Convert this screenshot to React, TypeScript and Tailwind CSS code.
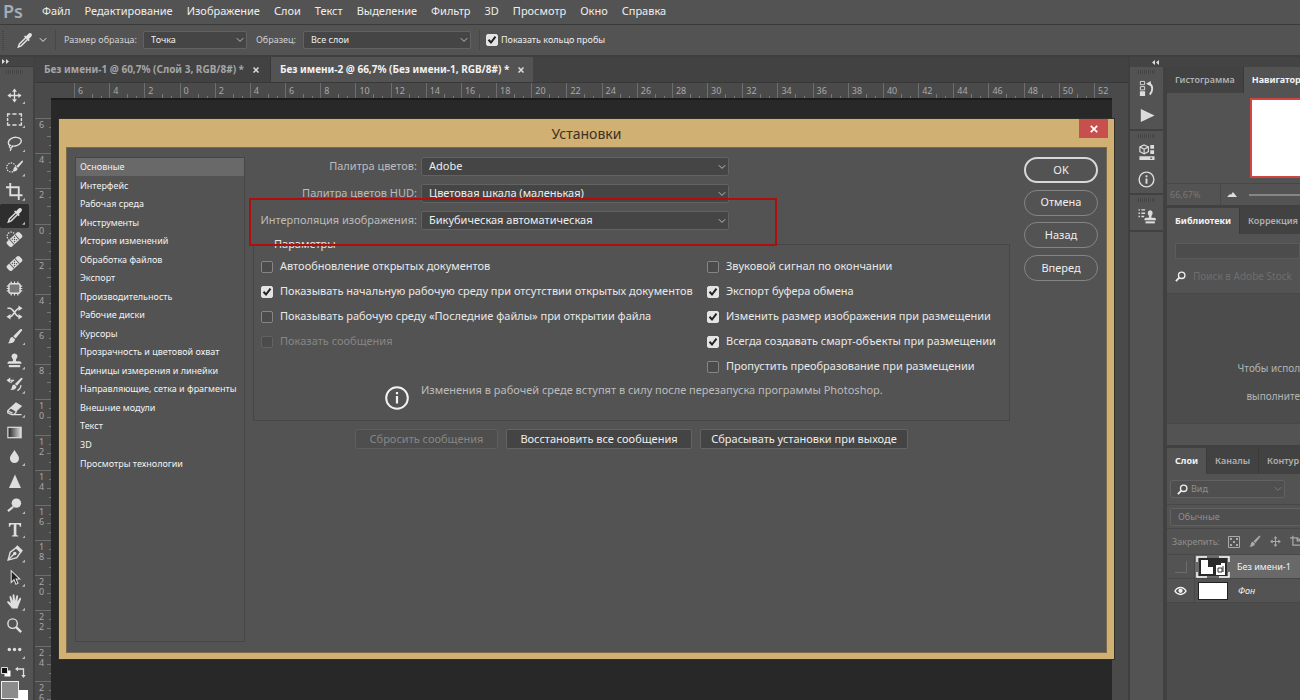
import type { ReactNode } from "react";
import clsx from "clsx";

const menu = [
  "Файл",
  "Редактирование",
  "Изображение",
  "Слои",
  "Текст",
  "Выделение",
  "Фильтр",
  "3D",
  "Просмотр",
  "Окно",
  "Справка",
];

const sections = [
  "Основные",
  "Интерфейс",
  "Рабочая среда",
  "Инструменты",
  "История изменений",
  "Обработка файлов",
  "Экспорт",
  "Производительность",
  "Рабочие диски",
  "Курсоры",
  "Прозрачность и цветовой охват",
  "Единицы измерения и линейки",
  "Направляющие, сетка и фрагменты",
  "Внешние модули",
  "Текст",
  "3D",
  "Просмотры технологии",
];

const rulerX = [6, 4, 2, ...Array.from({ length: 27 }, (_, i) => i * 2)];
const rulerY = [6, 4, 2, ...Array.from({ length: 14 }, (_, i) => i * 2)];

type Option = {
  id: string;
  label: string;
  checked?: boolean;
  disabled?: boolean;
};

const leftOptions: Option[] = [
  { id: "auto-update", label: "Автообновление открытых документов" },
  {
    id: "start-workspace",
    label: "Показывать начальную рабочую среду при отсутствии открытых документов",
    checked: true,
  },
  {
    id: "recent-workspace",
    label: "Показывать рабочую среду «Последние файлы» при открытии файла",
  },
  { id: "messages", label: "Показать сообщения", disabled: true },
];

const rightOptions: Option[] = [
  { id: "beep", label: "Звуковой сигнал по окончании" },
  { id: "clipboard", label: "Экспорт буфера обмена", checked: true },
  {
    id: "resize",
    label: "Изменить размер изображения при размещении",
    checked: true,
  },
  {
    id: "smart",
    label: "Всегда создавать смарт-объекты при размещении",
    checked: true,
  },
  { id: "skip", label: "Пропустить преобразование при размещении" },
];

const Icon = ({
  children,
  className = "size-[18px]",
  box = "0 0 18 18",
}: {
  children: ReactNode;
  className?: string;
  box?: string;
}) => (
  <svg
    viewBox={box}
    className={clsx("block shrink-0", className)}
    fill="none"
    stroke="currentColor"
    strokeWidth="1.3"
    aria-hidden="true"
  >
    {children}
  </svg>
);

const MoveShape = () => (
  <>
    <path d="M9 3v12M3 9h12" strokeWidth="1.4" />
    <path
      d="M9 1.500 11.600 5H6.400zM9 16.500 6.400 13h5.200zM1.500 9 5 6.400v5.200zM16.500 9 13 11.600V6.400z"
      fill="currentColor"
      stroke="none"
    />
  </>
);

const DropperShape = () => (
  <>
    <path d="M10.300 6 3.600 12.700 2.500 15.800 5.500 14.600 12.200 7.900" strokeWidth="1.5" />
    <path
      d="M8.500 4.800 13.400 9.700 14.600 8.500 13.600 7.500 16 5.100C17.200 3.800 17 2.400 16.200 1.700 15.300.9 14 1 12.900 2.100L10.700 4.500 9.700 3.600z"
      fill="currentColor"
      stroke="none"
    />
  </>
);

const BrushShape = () => (
  <g fill="currentColor" stroke="none">
    <path d="M16.800 1.200c.6.600.3 1.300-.2 2L10.200 11 7.600 8.700l7.200-7c.7-.6 1.400-1.100 2-.5z" />
    <path d="M6.900 9.500 9.500 11.900c.1 2.600-2.700 4.700-7.700 4.300 1.900-1 1.700-2.500 2.300-4.300.5-1.600 1.500-2.300 2.800-2.400z" />
  </g>
);

const StampShape = () => (
  <g fill="currentColor" stroke="none">
    <path d="M9 1.500a3.200 3.200 0 0 1 2.200 5.500c-.8.900-.8 1.800-.4 2.800h3.400c1.500 0 2.300.9 2.300 2.700h-15c0-1.800.8-2.700 2.300-2.700h3.400c.4-1 .4-1.900-.4-2.800A3.200 3.200 0 0 1 9 1.500z" />
    <path d="M3 13.800h12v2.300H3z" />
  </g>
);

const Bandage = () => (
  <g transform="rotate(-42 9 9)">
    <rect x="0" y="5.300" width="18" height="7.400" rx="2.200" fill="currentColor" stroke="none" />
    <path d="M5.200 5.300v7.400M12.800 5.300v7.400" stroke="#535353" strokeWidth="1" />
    <path
      d="M7.500 7.300h.1M10.400 7.300h.1M8.900 9h.1M7.500 10.700h.1M10.400 10.700h.1"
      stroke="#444"
      strokeWidth="1.2"
      strokeLinecap="square"
    />
  </g>
);

type Tool = { name: string; icon: ReactNode; more?: boolean };

const tools: Tool[] = [
  { name: "Перемещение", more: true, icon: <MoveShape /> },
  {
    name: "Прямоугольная область",
    more: true,
    icon: (
      <path
        d="M1.700 6V3.200H4.500M6.800 3.200h4.400M13.500 3.200h2.800V6M16.300 7.500v3M16.300 12v2.800h-2.800M11.200 14.800H6.800M4.500 14.800H1.700V12M1.700 10.500v-3"
        strokeWidth="1.5"
      />
    ),
  },
  {
    name: "Лассо",
    more: true,
    icon: (
      <>
        <path
          d="M4.500 11.300C1.600 10 1.800 6 5 4c3.400-2.200 8.700-2 10.600.4 1.800 2.500-.6 5.800-4.300 6.900-2 .6-4.200.6-5.500.2"
          strokeWidth="1.5"
        />
        <path d="M6.200 11.200c1.200 1.700-.4 3.100-1.900 2.300-1.400-.8-.7-2.600.9-2.500M4.800 13.300c.8 1 .6 2.200-.6 3.400" />
      </>
    ),
  },
  {
    name: "Быстрое выделение",
    more: true,
    icon: (
      <>
        <circle cx="5.500" cy="9" r="4.800" strokeDasharray="1.500 1.200" />
        <g transform="translate(5 1) scale(.76)">
          <BrushShape />
        </g>
      </>
    ),
  },
  {
    name: "Рамка",
    more: true,
    icon: <path d="M0 4.500h13.500V13M4.500 0v13h13M13.500 13v5" strokeWidth="2" />,
  },
  { name: "Пипетка", more: true, icon: <DropperShape /> },
  {
    name: "Точечная восстанавливающая кисть",
    icon: (
      <>
        <circle cx="5.500" cy="5.500" r="4.300" strokeDasharray="1.500 1.200" />
        <Bandage />
      </>
    ),
  },
  { name: "Восстанавливающая кисть", icon: <Bandage /> },
  {
    name: "Заплатка",
    icon: (
      <>
        <rect x="3" y="4" width="12" height="10" rx="2" fill="#777" strokeWidth="1.5" />
        <path d="M5.500 1.500v3M9 1.500v3M12.500 1.500v3M5.500 13.500v3M9 13.500v3M12.500 13.500v3M.8 6.500h3M.8 9h3M.8 11.500h3M14.200 6.500h3M14.200 9h3M14.200 11.500h3" />
      </>
    ),
  },
  {
    name: "Перемещение с учетом содержимого",
    icon: (
      <>
        <path d="M1.500 4.500H4c4 0 6 9 10 9h1M3.500 13.500H4c4 0 6-9 10-9h1" strokeWidth="1.7" />
        <path
          d="M13.200 1.500 17.500 4.500l-4.300 3zM13.200 10.500l4.300 3-4.300 3zM4.800 10.500.5 13.500l4.300 3z"
          fill="currentColor"
          stroke="none"
        />
      </>
    ),
  },
  { name: "Кисть", more: true, icon: <BrushShape /> },
  { name: "Штамп", more: true, icon: <StampShape /> },
  {
    name: "Архивная кисть",
    more: true,
    icon: (
      <>
        <g transform="translate(3 1) scale(.85)">
          <BrushShape />
        </g>
        <path d="M3 4.500h5.500c-2 .6-3 1.500-3.500 3M15.800 9.500c0 2.500-1.300 4.500-3.800 6" />
        <path d="M.5 4.500 4.500 1.500v6z" fill="currentColor" stroke="none" />
      </>
    ),
  },
  {
    name: "Ластик",
    more: true,
    icon: (
      <>
        <path d="M10.600 3.200 16 6.500l-5.400 5.200L5 8.400z" fill="currentColor" />
        <path d="M5 8.400 1.800 11.500v2.200L6 15.500h2l2.600-2.400v-1.500M2 11.700l5 2.200M7 15.500h9.500" />
      </>
    ),
  },
  {
    name: "Градиент",
    icon: (
      <>
        <defs>
          <linearGradient id="tool-gradient">
            <stop offset="0" stopColor="#222" />
            <stop offset="1" stopColor="#ddd" />
          </linearGradient>
        </defs>
        <rect x="2" y="3.500" width="14" height="11" fill="url(#tool-gradient)" />
      </>
    ),
  },
  {
    name: "Размытие",
    more: true,
    icon: (
      <path
        d="M9 1.800c1 3 4.800 5.600 4.800 9.400a4.800 4.800 0 0 1-9.600 0C4.200 7.400 8 4.800 9 1.800z"
        fill="currentColor"
        stroke="none"
      />
    ),
  },
  {
    name: "Резкость",
    icon: <path d="M9.500 1.500 15.800 16H3.200z" fill="currentColor" stroke="none" />,
  },
  {
    name: "Осветлитель",
    more: true,
    icon: (
      <>
        <circle cx="11" cy="6.500" r="5" fill="currentColor" stroke="none" />
        <path d="M7.500 10.500 2 15" strokeWidth="2.2" />
      </>
    ),
  },
  {
    name: "Текст",
    more: true,
    icon: (
      <path
        d="M3 2h13v4h-1.300c-.3-1.500-.8-2.300-2-2.300H11V14c0 1 .4 1.200 2 1.300v1H6.200v-1c1.500-.1 2-.3 2-1.300V3.700H6.300c-1.200 0-1.700.8-2 2.300H3z"
        fill="currentColor"
        stroke="none"
      />
    ),
  },
  {
    name: "Перо",
    more: true,
    icon: (
      <>
        <path d="M2.200 16 4.500 7.500 10.500 3l5 4.500-4 6z" strokeWidth="1.5" />
        <path d="M10.800 2.500 12 1.300l5 4.700-1.200 1.500zM2.500 15.600 8.500 9.500" fill="currentColor" />
        <circle cx="9.300" cy="8.900" r="1.200" fill="currentColor" />
      </>
    ),
  },
  {
    name: "Выделение контура",
    more: true,
    icon: (
      <path
        d="M5.500 1.800v12.400l3-2.900 2 4.900 2.200-1-2-4.600h3.900z"
        fill="#222"
        strokeWidth="1.1"
      />
    ),
  },
  {
    name: "Рука",
    more: true,
    icon: (
      <path
        d="M6.300 16.500c-1-2.400-3.500-4.500-5-6.500-.5-1 .8-1.800 1.800-1l2 1.700L3.700 4.500c-.2-1.300 1.400-1.700 1.900-.5L7.200 8.400 7 2.400c0-1.300 1.800-1.300 2 0l.6 5.800 1.300-5c.3-1.200 2-.9 1.900.4L12 9l2.300-3.400c.7-1 2-.2 1.600.9L13.600 12.500c-.5 1.700-1.100 2.700-1.100 4z"
        fill="currentColor"
        stroke="none"
      />
    ),
  },
  {
    name: "Масштаб",
    icon: (
      <>
        <circle cx="7" cy="7" r="5" strokeWidth="1.5" />
        <path d="M10.700 10.700 16 16" strokeWidth="2.6" />
      </>
    ),
  },
  {
    name: "Изменить панель инструментов",
    more: true,
    icon: (
      <g fill="currentColor" stroke="none">
        <circle cx="3.500" cy="9" r="1.800" />
        <circle cx="9" cy="9" r="1.800" />
        <circle cx="14.500" cy="9" r="1.800" />
      </g>
    ),
  },
];

const Grip = () => (
  <div className="h-1 w-[18px] bg-[repeating-linear-gradient(90deg,#444_0_1px,#555_1px_2px)]" />
);

const Check = ({
  id,
  checked,
  disabled,
}: {
  id: string;
  checked?: boolean;
  disabled?: boolean;
}) => (
  <span className="grid size-3 shrink-0 place-items-center">
    <input
      id={id}
      type="checkbox"
      defaultChecked={checked}
      disabled={disabled}
      className="peer col-start-1 row-start-1 size-3 appearance-none rounded-[2px] border border-[#868686] bg-[#4b4b4b] checked:border-[#e4e4e4] checked:bg-[#e4e4e4] disabled:border-[#626262]"
    />
    <svg
      viewBox="0 0 12 12"
      className="pointer-events-none invisible col-start-1 row-start-1 size-3 peer-checked:visible"
      fill="none"
      stroke="#222"
      strokeWidth="2"
      aria-hidden="true"
    >
      <path d="M2.500 5.800 5 8.500l4.500-5.800" />
    </svg>
  </span>
);

const Select = ({
  id,
  value,
  className,
  dim,
  indent,
}: {
  id: string;
  value: string;
  className?: string;
  dim?: boolean;
  indent?: boolean;
}) => (
  <span className={clsx("grid items-center", className)}>
    <select
      id={id}
      aria-label={value}
      className={clsx(
        "col-start-1 row-start-1 h-full w-full appearance-none rounded-[2px] border pr-[7px]",
        indent ? "pl-5" : "pl-[7px]",
        dim
          ? "border-[#616161] bg-[#4f4f4f] text-[#8e8e8e]"
          : "border-[#626262] bg-[#454545] text-[#eee]"
      )}
    >
      <option>{value}</option>
    </select>
    <svg
      viewBox="0 0 8 6"
      className={clsx(
        "pointer-events-none col-start-1 row-start-1 mr-[3px] h-1.5 w-2 justify-self-end",
        dim ? "text-[#777]" : "text-[#bbb]"
      )}
      fill="none"
      stroke="currentColor"
      aria-hidden="true"
    >
      <path d="M.8 1.200 4 4.400 7.200 1.200" />
    </svg>
  </span>
);

const OptionRow = ({ option }: { option: Option }) => (
  <div className="flex h-[25px] items-center gap-[7px]">
    <Check id={option.id} checked={option.checked} disabled={option.disabled} />
    <label
      htmlFor={option.id}
      className={option.disabled ? "text-[#868686]" : "text-[#e8e8e8]"}
    >
      {option.label}
    </label>
  </div>
);

const TopBars = () => (
  <header>
    <nav className="flex h-[25px] items-center border-b border-[#3a3a3a] pb-0.5">
      <span className="w-[35px] shrink-0 pl-[3px] text-[18px] leading-6 font-semibold text-[#a3adb8]">
        Ps
      </span>
      {menu.map((item) => (
        <button key={item} className="px-[7px] text-[11px] leading-4 text-[#eee]">
          {item}
        </button>
      ))}
    </nav>
    <div className="flex h-8 items-center border-b-2 border-[#3f3f3f] text-[9px] text-[#d0d0d0]">
      <div className="mr-3 ml-[2px] h-5 w-[2px] bg-[repeating-linear-gradient(0deg,#444_0_1px,#555_1px_2px)]" />
      <button aria-label="Пипетка" className="flex items-center gap-1.5 text-[#e4e4e4]">
        <Icon className="size-[17px]">
          <DropperShape />
        </Icon>
        <Icon box="0 0 8 6" className="h-1.5 w-2">
          <path d="M.8 1.200 4 4.400 7.200 1.200" strokeWidth="1" />
        </Icon>
      </button>
      <div className="mx-2 h-5 w-px bg-[#474747]" />
      <label htmlFor="sample-size" className="w-[79px]">
        Размер образца:
      </label>
      <Select id="sample-size" value="Точка" className="h-[18px] w-[104px]" />
      <label htmlFor="sample-layers" className="ml-[9px] w-[47px]">
        Образец:
      </label>
      <Select id="sample-layers" value="Все слои" className="h-[18px] w-[168px]" />
      <div className="mr-[6px] ml-2 h-5 w-px bg-[#474747]" />
      <Check id="ring" checked />
      <label htmlFor="ring" className="ml-[3px] text-[#eee]">
        Показать кольцо пробы
      </label>
    </div>
  </header>
);

const ToolBar = () => (
  <aside className="flex w-[35px] shrink-0 flex-col border-r-2 border-[#414141] text-[#dedede]">
    <div className="flex h-[10px] shrink-0 items-center border-b border-[#3c3c3c] bg-[#444] pl-[2px]">
      <Icon box="0 0 7 5" className="h-[5px] w-[7px]">
        <path d="M0 0 3 2.500 0 5zM4 0 7 2.500 4 5z" fill="currentColor" stroke="none" />
      </Icon>
    </div>
    <div className="flex h-4 shrink-0 items-start px-1.5 pt-[3px]">
      <Grip />
    </div>
    <div className="flex h-[579px] shrink-0 flex-col pr-1">
      {tools.map((tool, i) => (
        <button
          key={tool.name}
          aria-label={tool.name}
          className={clsx(
            "relative flex flex-1 items-center pl-1.5",
            i === 5 && "rounded-[2px] bg-[#2e2e2e]"
          )}
        >
          <Icon className="size-[17px]">{tool.icon}</Icon>
          {tool.more && (
            <span className="absolute right-1 bottom-[3px] size-[3px] bg-[#bbb] [clip-path:polygon(100%_0,100%_100%,0_100%)]" />
          )}
        </button>
      ))}
    </div>
    <div className="flex h-[19px] shrink-0 items-center justify-between pr-1.5">
      <Icon box="0 0 12 12" className="size-3">
        <path d="M4.500 4.500h6v6h-6z" fill="#fff" stroke="none" />
        <path d="M1.500 1.500h6v6h-6z" fill="#111" strokeWidth="1" />
      </Icon>
      <Icon box="0 0 12 12" className="size-3">
        <path d="M2 3h6.500v6" />
        <path d="M0 3 3 .8v4.400zM8.500 12 6.300 9h4.400z" fill="currentColor" stroke="none" />
      </Icon>
    </div>
    <div className="relative h-7 shrink-0">
      <span className="absolute top-[9px] left-[14px] size-[14px] bg-white" />
      <span className="absolute top-0 left-[1px] size-[18px] border border-[#eee] bg-[#8b8b8b]" />
    </div>
  </aside>
);

const Dialog = () => (
  <section
    role="dialog"
    aria-label="Установки"
    className="absolute top-[62px] right-[14px] bottom-[41px] left-6 flex flex-col bg-[#d1b073] px-[7px] pb-1.5 text-[11px] shadow-[0_0_0_1px_#33302a]"
  >
    <div className="relative flex h-7 shrink-0 items-center justify-center text-[14px] text-[#3b3222]">
      Установки
      <button
        aria-label="Закрыть"
        className="absolute top-0 -right-[1px] flex h-[19px] w-[29px] items-center justify-center bg-[#c7504f] text-white"
      >
        <Icon box="0 0 8 8" className="size-2">
          <path d="M.8.8 7.200 7.200M7.200.8.8 7.200" strokeWidth="1.7" />
        </Icon>
      </button>
    </div>
    <div className="flex min-h-0 flex-1 border border-[#77694b] bg-[#535353] pt-[9px] pr-2 pb-[10px] pl-2">
      <div className="w-[170px] shrink-0 border border-[#464646] text-[9px] text-[#f2f2f2]">
        <ul className="flex h-[315px] flex-col">
          {sections.map((name, i) => (
            <li key={name} className="flex flex-1">
              <button
                className={clsx(
                  "mb-px w-full pl-1 text-left",
                  i === 0 && "bg-[#696969]"
                )}
              >
                {name}
              </button>
            </li>
          ))}
        </ul>
      </div>

      <div className="relative ml-2 w-[757px] shrink-0">
        <div className="grid grid-cols-[164px_308px] gap-x-1 gap-y-2 text-[#bcbcbc]">
          <label htmlFor="picker" className="self-center text-right">
            Палитра цветов:
          </label>
          <Select id="picker" value="Adobe" className="h-[19px]" />
          <label htmlFor="hud" className="self-center text-right">
            Палитра цветов HUD:
          </label>
          <Select id="hud" value="Цветовая шкала (маленькая)" className="h-[19px]" />
          <label htmlFor="interpolation" className="self-center text-right">
            Интерполяция изображения:
          </label>
          <Select
            id="interpolation"
            value="Бикубическая автоматическая"
            className="h-[19px]"
          />
        </div>

        <fieldset className="mt-1.5 border border-[#464646] pt-0.5 pb-[9px]">
          <legend className="ml-4 px-1 leading-4 text-[#e4e4e4]">Параметры</legend>
          <div className="flex pl-[7px]">
            <div className="w-[446px]">
              {leftOptions.map((option) => (
                <OptionRow key={option.id} option={option} />
              ))}
            </div>
            <div>
              {rightOptions.map((option) => (
                <OptionRow key={option.id} option={option} />
              ))}
            </div>
          </div>
          <div className="flex gap-3 pl-[131px] text-[#bcbcbc]">
            <Icon box="0 0 24 24" className="mt-[7px] size-6 text-[#f2f2f2]">
              <circle cx="12" cy="12" r="10.800" strokeWidth="2" />
              <path d="M12 10v7.500M12 6v2.300" strokeWidth="2.2" />
            </Icon>
            <p className="h-8 leading-[22px]">
              Изменения в рабочей среде вступят в силу после перезапуска программы
              Photoshop.
            </p>
          </div>
        </fieldset>

        <div className="mt-2 flex gap-2 pl-[102px] text-[#eee]">
          <button
            disabled
            className="h-5 w-[143px] rounded-[2px] border border-[#5e5e5e] bg-[#4e4e4e] text-[#868686]"
          >
            Сбросить сообщения
          </button>
          <button className="h-5 w-[186px] rounded-[2px] border border-[#646464] bg-[#444]">
            Восстановить все сообщения
          </button>
          <button className="h-5 w-[208px] rounded-[2px] border border-[#646464] bg-[#444]">
            Сбрасывать установки при выходе
          </button>
        </div>

        <div className="pointer-events-none absolute top-[41px] -left-[4px] h-12 w-[528px] border-2 border-[#b00d0d]" />
      </div>

      <div className="ml-auto flex h-[124px] w-[74px] shrink-0 flex-col justify-between text-[#eee]">
        <button className="h-[26px] rounded-full border-2 border-[#d8d8d8]">OK</button>
        <button className="h-[26px] rounded-full border border-[#858585]">Отмена</button>
        <button className="h-[26px] rounded-full border border-[#858585]">Назад</button>
        <button className="h-[26px] rounded-full border border-[#858585]">Вперед</button>
      </div>
    </div>
  </section>
);

const Document = () => (
  <main className="relative flex min-w-0 flex-1 flex-col">
    <div className="flex h-[26px] shrink-0 border-b border-[#383838] bg-[#424242] text-[10px] font-bold">
      <button className="flex w-[236px] items-center gap-[9px] border-r border-[#383838] pl-[9px] text-[#a6a6a6]">
        Без имени-1 @ 60,7% (Слой 3, RGB/8#) *
        <Icon box="0 0 6 6" className="size-1.5 text-[#ddd]">
          <path d="M.5.5 5.500 5.500M5.500.5.5 5.500" strokeWidth="1.5" />
        </Icon>
      </button>
      <button className="flex w-[262px] items-center gap-[9px] bg-[#535353] pl-[9px] text-[#f2f2f2]">
        Без имени-2 @ 66,7% (Без имени-1, RGB/8#) *
        <Icon box="0 0 6 6" className="size-1.5 text-[#ddd]">
          <path d="M.5.5 5.500 5.500M5.500.5.5 5.500" strokeWidth="1.5" />
        </Icon>
      </button>
    </div>
    <div className="flex min-h-0 flex-1">
      <div className="flex min-w-0 flex-1 flex-col overflow-hidden bg-[#4a4a4a] text-[9px] text-[#a8a8a8]">
        <div className="flex h-[15px] shrink-0">
          <div className="w-[39px] shrink-0" />
          <div className="flex w-[1055px] shrink-0">
            {rulerX.map((n, i) => (
              <div key={i} className="flex flex-1 items-end border-l border-[#6e6e6e]">
                <span className="w-[17px] self-center pl-[3px] leading-[15px]">{n}</span>
                <span className="h-1 w-[9px] border-l border-[#777]" />
                <span className="h-[2px] w-px bg-[#777]" />
              </div>
            ))}
          </div>
        </div>
        <div className="flex min-h-0 flex-1">
          <div className="w-4 shrink-0 overflow-hidden">
            <div className="h-5" />
            <div className="flex h-[598px] flex-col">
              {rulerY.map((n, i) => (
                <div
                  key={i}
                  className="flex min-h-0 flex-1 justify-between border-t border-[#6e6e6e] pl-1"
                >
                  <span className="pt-px">
                    {String(n)
                      .split("")
                      .map((digit, k) => (
                        <span key={k} className="block leading-[10px]">
                          {digit}
                        </span>
                      ))}
                  </span>
                  <span className="flex flex-col items-end gap-2 pt-2">
                    <span className="h-px w-[2px] bg-[#777]" />
                    <span className="h-px w-1 bg-[#777]" />
                    <span className="h-px w-[2px] bg-[#777]" />
                  </span>
                </div>
              ))}
            </div>
          </div>
          <div className="flex-1 border-t-2 border-[#1c1c1c] bg-[#282828]" />
        </div>
      </div>
      <div className="w-4 shrink-0 bg-[#4a4a4a]" />
    </div>
    <Dialog />
  </main>
);

const DockGroup = ({ children }: { children: ReactNode }) => (
  <div className="flex flex-col items-center border-b-2 border-[#414141] pt-[3px] pb-[5px]">
    <Grip />
    <div className="mt-1.5 flex flex-col items-center gap-[10px]">{children}</div>
  </div>
);

const Dock = () => (
  <div className="flex w-[33px] shrink-0 flex-col text-[#dcdcdc]">
    <DockGroup>
      <Icon className="size-[17px]">
        <path d="M2.500 1.500H7V5H2.500zM2.500 7H7v3.500H2.500z" strokeWidth="1" />
        <path d="M2 12h5.500v5H2zM8.500 4 13.500 1v5.500z" fill="currentColor" stroke="none" />
        <path d="M12 3.500c4 2.500 4 8 .5 12" strokeWidth="2" />
      </Icon>
      <Icon className="size-[17px]">
        <path d="M3 2 17.500 9 3 16z" fill="currentColor" stroke="none" />
      </Icon>
    </DockGroup>
    <DockGroup>
      <Icon className="size-[17px]">
        <path d="M6.500 1 11 3v5l-4.500 2.500L2 8V3zM2 3l4.500 2.500L11 3M6.500 5.500v5" />
        <path
          d="M13 1h4v4h-4zM13 6.500h4v4h-4zM1.500 13h16v4h-16z"
          fill="currentColor"
          stroke="none"
        />
        <path d="M13 15h2" stroke="#444" />
      </Icon>
      <Icon className="size-[17px]">
        <circle cx="9" cy="9" r="7.800" strokeWidth="1.5" />
        <path d="M9 8v5.500M9 4.500v2" strokeWidth="2" />
      </Icon>
    </DockGroup>
    <DockGroup>
      <Icon box="0 0 20 18" className="h-[17px] w-5">
        <path d="M1 2h1.500M4 2h4M1 5.500h1.500M4 5.500h4M1 9h1.500M4 9h3" strokeWidth="1.5" />
        <g transform="translate(6 1) scale(.82 .95)">
          <StampShape />
        </g>
      </Icon>
    </DockGroup>
  </div>
);

const PanelTabs = ({ tabs, active }: { tabs: string[]; active: number }) => (
  <div className="flex h-[26px] shrink-0 bg-[#424242] text-[9px]">
    {tabs.map((tab, i) => (
      <button
        key={tab}
        className={clsx(
          "shrink-0 border-r border-[#3a3a3a] px-2",
          i === active
            ? "bg-[#535353] font-bold text-[#f2f2f2]"
            : "font-semibold text-[#b0b0b0]"
        )}
      >
        {tab}
      </button>
    ))}
  </div>
);

const Loupe = ({ className }: { className?: string }) => (
  <Icon box="0 0 12 12" className={clsx("size-[11px]", className)}>
    <circle cx="7.300" cy="4.700" r="3.500" strokeWidth="1.5" />
    <path d="M4.700 7.300 1 11" strokeWidth="2" />
  </Icon>
);

const Panels = () => (
  <div className="flex w-[137px] shrink-0 flex-col overflow-hidden border-l-4 border-[#414141] whitespace-nowrap">
    <PanelTabs tabs={["Гистограмма", "Навигатор"]} active={1} />
    <div className="flex h-[90px] shrink-0 items-center justify-end">
      <div className="h-20 w-[50px] border-2 border-r-0 border-[#cf4740] bg-white" />
    </div>
    <div className="flex h-[22px] shrink-0 items-center border-t border-[#484848] text-[9px] text-[#777]">
      <span className="w-[54px] self-stretch border-r border-[#484848] pl-[3px] leading-[22px]">
        66,67%
      </span>
      <Icon box="0 0 10 5" className="ml-1.5 h-[5px] w-[10px] text-[#ddd]">
        <path d="M0 5 3 2l1 .8L6 0l4 5z" fill="currentColor" stroke="none" />
      </Icon>
      <span className="ml-3 h-[2px] flex-1 bg-[#868686]" />
    </div>
    <div className="h-[3px] shrink-0 bg-[#414141]" />

    <PanelTabs tabs={["Библиотеки", "Коррекция"]} active={0} />
    <div className="flex h-[60px] shrink-0 flex-col border-b border-[#484848] pl-2">
      <input
        aria-label="Библиотека"
        className="mt-[9px] h-4 w-full shrink-0 border border-[#5b5b5b] bg-[#4c4c4c]"
      />
      <div className="flex flex-1 items-center gap-[7px]">
        <Loupe className="text-[#eee]" />
        <input
          aria-label="Поиск"
          placeholder="Поиск в Adobe Stock"
          className="min-w-0 flex-1 text-[10px] placeholder:text-[#6e6e6e]"
        />
      </div>
    </div>
    <div className="flex h-[129px] shrink-0 flex-col items-end justify-end gap-1 bg-[#4c4c4c] pb-[15px] text-[10px] leading-6 text-[#b4b4b4]">
      <p>Чтобы испол</p>
      <p>выполните</p>
    </div>
    <div className="h-[22px] shrink-0 border-t border-[#484848]" />
    <div className="h-[3px] shrink-0 bg-[#414141]" />

    <PanelTabs tabs={["Слои", "Каналы", "Контур"]} active={0} />
    <div className="flex h-[31px] shrink-0 items-center border-b border-[#484848] pl-[3px] text-[9px]">
      <span className="relative flex items-center">
        <Select id="layer-kind" value="Вид" className="h-[18px] w-[115px]" dim indent />
        <Loupe className="pointer-events-none absolute left-[7px] text-[#eee]" />
      </span>
    </div>
    <div className="flex h-6 shrink-0 items-center border-b border-[#484848] pl-[3px] text-[9px]">
      <Select id="blend" value="Обычные" className="h-[18px] w-[150px] shrink-0" dim />
    </div>
    <div className="flex h-[26px] shrink-0 items-center gap-2 border-b border-[#484848] pl-[5px] text-[9px] text-[#8e8e8e]">
      <span className="w-12 shrink-0">Закрепить:</span>
      <Icon box="0 0 12 12" className="size-3 text-[#aaa]">
        <path d="M.5.5h11v11H.5z" strokeWidth="1" />
        <path
          d="M2 2h2v2H2zM8 2h2v2H8zM5 5h2v2H5zM2 8h2v2H2zM8 8h2v2H8z"
          fill="currentColor"
          stroke="none"
        />
      </Icon>
      <Icon className="size-[13px] text-[#aaa]">
        <BrushShape />
      </Icon>
      <Icon className="size-[13px] text-[#aaa]">
        <MoveShape />
      </Icon>
      <Icon className="size-[13px] text-[#aaa]">
        <path d="M0 4h10l5 4M4 1v13h14M10 4v4h6" strokeWidth="1.7" />
      </Icon>
    </div>
    <div className="flex h-6 shrink-0 border-b border-[#484848] text-[9px] text-[#f2f2f2]">
      <div className="flex w-7 items-center justify-center border-r border-[#484848]">
        <span className="size-3 border-r border-b border-[#6c6c6c]" />
      </div>
      <div className="flex flex-1 items-center gap-[7px] bg-[#696969] pl-px">
        <Icon box="0 0 34 22" className="h-[22px] w-[34px]">
          <path d="M3 2h28v18H3z" fill="#2a2a2a" stroke="none" />
          <path d="M5 4h7v7h5v7H5zM20 9h5v-2h4v12h-9z" fill="#fff" stroke="none" />
          <path d="M1 6V1h10M23 1h10v5M33 16v5H23M11 21H1v-5" stroke="#fff" strokeWidth="1.5" />
          <path d="M22 12h4v4h-4zM27 10v6" stroke="#333" strokeWidth="1" />
        </Icon>
        Без имени-1
      </div>
    </div>
    <div className="flex h-6 shrink-0 border-b border-[#484848] text-[9px] text-[#f2f2f2]">
      <div className="flex w-7 items-center justify-center border-r border-[#484848]">
        <Icon box="0 0 14 10" className="h-[10px] w-[13px]">
          <path d="M1 5c3-5 9-5 12 0-3 5-9 5-12 0z" strokeWidth="1.5" />
          <circle cx="7" cy="4.800" r="2.300" fill="currentColor" stroke="none" />
        </Icon>
      </div>
      <div className="flex flex-1 items-center gap-[10px] pl-[3px] italic">
        <span className="h-[18px] w-[30px] border border-[#222] bg-white" />
        Фон
      </div>
    </div>
    <div className="flex-1 bg-[#4c4c4c]" />
  </div>
);

export default function App() {
  return (
    <div className="flex h-screen flex-col overflow-hidden bg-[#535353] font-['Noto_Sans','Open_Sans',sans-serif]">
      <TopBars />
      <div className="flex min-h-0 flex-1">
        <ToolBar />
        <Document />
        <div className="flex shrink-0 flex-col border-l-2 border-[#3f3f3f]">
          <div className="flex h-[10px] shrink-0 items-center bg-[#444] pl-[22px] text-[#dcdcdc]">
            <Icon box="0 0 7 5" className="h-[5px] w-[7px]">
              <path d="M3 0 0 2.500 3 5zM7 0 4 2.500 7 5z" fill="currentColor" stroke="none" />
            </Icon>
          </div>
          <div className="flex min-h-0 flex-1">
            <Dock />
            <Panels />
          </div>
        </div>
      </div>
    </div>
  );
}
